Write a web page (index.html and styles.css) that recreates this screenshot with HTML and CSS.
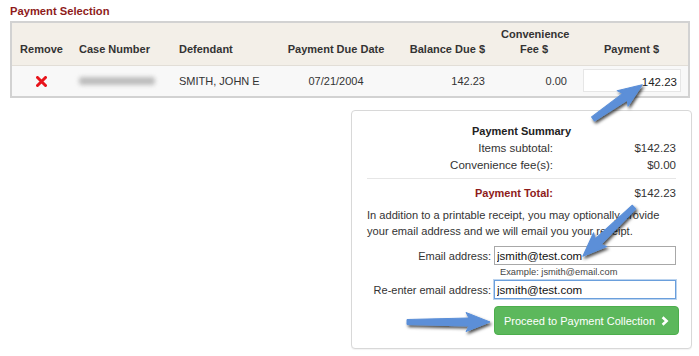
FILE: index.html
```html
<!DOCTYPE html>
<html>
<head>
<meta charset="utf-8">
<link rel="stylesheet" href="styles.css">
</head>
<body>
<div class="page">
  <h2 class="title">Payment Selection</h2>
  <table class="grid">
    <thead>
      <tr>
        <th class="c-remove">Remove</th>
        <th class="c-case">Case Number</th>
        <th class="c-def">Defendant</th>
        <th class="c-date">Payment Due Date</th>
        <th class="c-bal">Balance Due $</th>
        <th class="c-fee">Convenience<br>Fee $</th>
        <th class="c-pay">Payment $</th>
      </tr>
    </thead>
    <tbody>
      <tr>
        <td class="c-remove">
          <svg class="xicon" width="11" height="11" viewBox="0 0 11 11"><path d="M1.5 1.5 L9.5 9.5 M9.5 1.5 L1.5 9.5" stroke="#e8141b" stroke-width="3" stroke-linecap="round"/></svg>
        </td>
        <td class="c-case"><span class="blur"></span></td>
        <td class="c-def">SMITH, JOHN E</td>
        <td class="c-date">07/21/2004</td>
        <td class="c-bal">142.23</td>
        <td class="c-feev">0.00</td>
        <td class="c-payv"><input class="payin" type="text" value="142.23"></td>
      </tr>
    </tbody>
  </table>

  <div class="summary">
    <div class="sum-head">Payment Summary</div>
    <div class="sum-row"><span>Items subtotal:</span><span>$142.23</span></div>
    <div class="sum-row"><span>Convenience fee(s):</span><span>$0.00</span></div>
    <hr class="sep">
    <div class="sum-row total"><span class="tlabel">Payment Total:</span><span>$142.23</span></div>
    <p class="note">In addition to a printable receipt, you may optionally provide your email address and we will email you your receipt.</p>
    <div class="frow">
      <label class="flabel">Email address:</label>
      <input class="fin" type="text" value="jsmith@test.com">
    </div>
    <div class="frow">
      <span></span>
      <span class="example">Example: jsmith@email.com</span>
    </div>
    <div class="frow">
      <label class="flabel">Re-enter email address:</label>
      <input class="fin focus" type="text" value="jsmith@test.com">
    </div>
    <div class="frow btnrow">
      <span></span>
      <button class="proceed">Proceed to Payment Collection <svg class="chev" width="8" height="10" viewBox="0 0 8 10"><path d="M1.6 1.2 L5.6 5 L1.6 8.8" fill="none" stroke="#fff" stroke-width="2.6"/></svg></button>
    </div>
  </div>
</div>

<svg class="arrows" width="699" height="356" viewBox="0 0 699 356">
  <defs>
    <filter id="sh" x="-20%" y="-50%" width="140%" height="200%">
      <feDropShadow dx="1.5" dy="2.2" stdDeviation="1.4" flood-color="#000" flood-opacity="0.7"/>
    </filter>
  </defs>
  <g filter="url(#sh)" fill="#5b8fd8" stroke="#5b8fd8" stroke-width="1" stroke-linejoin="round">
    <path transform="translate(593 119) rotate(-34.8)" d="M0,-2.5 L39,-4 L36,-9.5 L60,0 L36,9.5 L39,4 L0,2.5 Z"/>
    <path transform="translate(634 207) rotate(136.1)" d="M0,-2.5 L50,-4 L47,-9.5 L71,0 L47,9.5 L50,4 L0,2.5 Z"/>
    <path transform="translate(407 322)" d="M0,-2.5 L62,-4 L59,-9.5 L83,0 L59,9.5 L62,4 L0,2.5 Z"/>
  </g>
</svg>
</body>
</html>
```

FILE: styles.css
```css
* { box-sizing: border-box; }

html, body {
  margin: 0;
  padding: 0;
  background: #fff;
}

body {
  font-family: "Liberation Sans", Arial, Helvetica, sans-serif;
  font-size: 11px;
  color: #333;
  position: relative;
  width: 699px;
  height: 356px;
  overflow: hidden;
}

.page {
  padding: 5px 0 0 10px;
}

.title {
  margin: 0 0 3px 0;
  font-size: 11.2px;
  line-height: 13px;
  font-weight: bold;
  color: #8e1b1b;
}

.grid {
  width: 680px;
  border-collapse: collapse;
  border: 2px solid #d2d2d2;
  table-layout: fixed;
}

.grid th {
  background: #f3efe8;
  font-weight: bold;
  color: #333;
  vertical-align: bottom;
  padding: 0 8px 8px;
  height: 43px;
  line-height: 15px;
  border-bottom: 1px solid #e2ded7;
}

.grid td {
  background: #f8f8f8;
  height: 32px;
  padding: 0 8px;
  vertical-align: middle;
  color: #333;
}

.c-remove { width: 60px; text-align: center; }
.c-case { width: 100px; text-align: left; }
.c-def { width: 108px; text-align: left; }
.c-date { width: 114px; text-align: center; }
.c-bal { width: 100px; text-align: right; }
.c-fee { width: 82px; text-align: center; }
.c-feev { text-align: right; }
.c-pay { text-align: center; }
.c-payv { text-align: left; }

.xicon { display: block; margin: 0 auto; position: relative; top: 1px; }

.blur {
  display: block;
  width: 76px;
  height: 8px;
  background: #bdbdbd;
  filter: blur(2px);
  border-radius: 3px;
}

.payin {
  width: 98px;
  height: 23px;
  border: 1px solid #e6e6e6;
  background: #fff;
  font-family: "Liberation Sans", Arial, sans-serif;
  font-size: 11.5px;
  color: #222;
  text-align: right;
  padding: 2px 3px 0 3px;
  margin: 0;
  display: block;
}

.summary {
  width: 341px;
  margin: 12px 7px 0 auto;
  border: 1px solid #d8d8d8;
  border-radius: 4px;
  padding: 12px 15px 13px;
  box-shadow: 0 1px 1px rgba(0,0,0,0.05);
  background: #fff;
}

.sum-head {
  text-align: center;
  font-weight: bold;
  color: #222;
  line-height: 17px;
  font-size: 11px;
}

.sum-row {
  display: grid;
  grid-template-columns: 186px 1fr;
  line-height: 17px;
  font-size: 11.5px;
  color: #333;
}

.sum-row span { text-align: right; }

.sep {
  border: 0;
  border-top: 1px solid #e6e6e6;
  margin: 4px 0 6px;
  height: 0;
}

.total .tlabel {
  color: #8e1b1b;
  font-weight: bold;
  font-size: 11px;
}

.note {
  margin: 5px 0 7px;
  line-height: 16px;
  font-size: 11.1px;
  color: #333;
}

.frow {
  display: grid;
  grid-template-columns: 124px 1fr;
  column-gap: 3px;
  align-items: center;
}

.flabel {
  text-align: right;
  font-size: 11px;
  color: #333;
}

.fin {
  width: 182px;
  height: 19px;
  border: 1px solid #a8a8a8;
  background: #fff;
  font-family: "Liberation Sans", Arial, sans-serif;
  font-size: 11.5px;
  color: #111;
  padding: 1px 1px 0 2px;
  margin: 0;
}

.fin.focus {
  border-color: #6a9fdc;
  box-shadow: 0 0 0 1px rgba(106,159,220,0.45);
}

.example {
  font-size: 9.3px;
  line-height: 15px;
  padding-left: 6px;
  color: #444;
}

.btnrow { margin-top: 7px; }

.proceed {
  width: 185px;
  height: 29px;
  background: #5cb85c;
  border: 1px solid #4cae4c;
  border-radius: 4px;
  color: #fff;
  font-family: "Liberation Sans", Arial, sans-serif;
  font-size: 11px;
  padding: 0;
  margin: 0;
  display: flex;
  align-items: center;
  justify-content: center;
  gap: 6px;
}

.chev { display: block; }

.arrows {
  position: absolute;
  left: 0;
  top: 0;
  pointer-events: none;
}
```
